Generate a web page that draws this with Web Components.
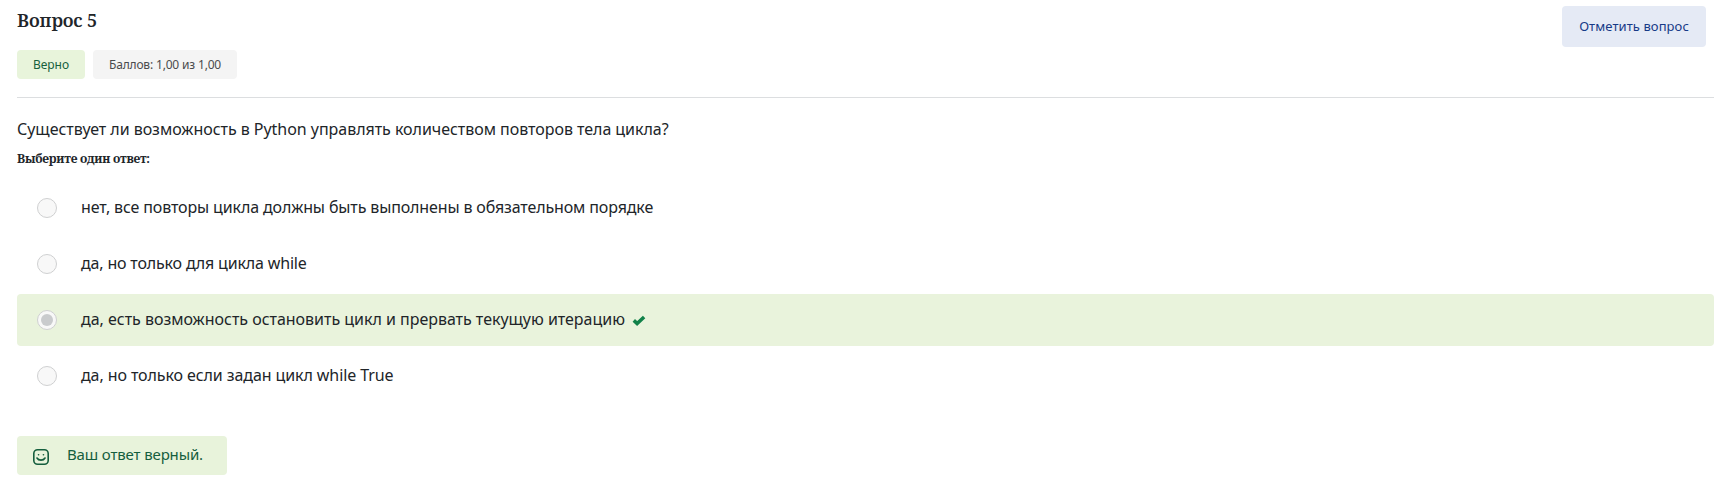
<!DOCTYPE html>
<html lang="ru"><head><meta charset="utf-8"><title>Вопрос 5</title>
<style>body{margin:0;background:#fff;color:#212529;font-family:"Noto Sans","Open Sans",sans-serif}</style></head>
<body>
<quiz-question>
<question-header slot="header">
<span slot="title">Вопрос 5</span>
<status-tag slot="tags" kind="ok">Верно</status-tag>
<status-tag slot="tags" kind="grade">Баллов: 1,00 из 1,00</status-tag>
<flag-button slot="action">Отметить вопрос</flag-button>
</question-header>
<span slot="text">Существует ли возможность в Python управлять количеством повторов тела цикла?</span>
<span slot="prompt">Выберите один ответ:</span>
<answer-option style="--ls:-.133px">нет, все повторы цикла должны быть выполнены в обязательном порядке</answer-option>
<answer-option style="--ls:-.17px">да, но только для цикла while</answer-option>
<answer-option checked correct style="--ls:-.02px">да, есть возможность остановить цикл и прервать текущую итерацию</answer-option>
<answer-option style="--ls:-.09px">да, но только если задан цикл while True</answer-option>
<answer-feedback slot="feedback">Ваш ответ верный.</answer-feedback>
</quiz-question>
<script>
const define=(name,html)=>customElements.define(name,class extends HTMLElement{
constructor(){super();const t=document.createElement('template');t.innerHTML=html;this.attachShadow({mode:'open'}).append(t.content.cloneNode(true));}
});
define('quiz-question',`<style>
:host{display:block;padding:0 5px 0 17px}
.text{font-size:16px;line-height:24px;margin-top:19px;letter-spacing:-.035px;white-space:nowrap}
.prompt{font:700 12px/18px "Noto Serif","DejaVu Serif Condensed","DejaVu Serif",serif;margin-top:9px;letter-spacing:-.25px;white-space:nowrap}
.answers{display:flex;flex-direction:column;gap:4px;margin-top:14px}
.feedback{display:flex;margin-top:34px}
</style><slot name="header"></slot><div class="text"><slot name="text"></slot></div><div class="prompt"><slot name="prompt"></slot></div><div class="answers"><slot></slot></div><div class="feedback"><slot name="feedback"></slot></div>`);
define('question-header',`<style>
:host{display:flex;box-sizing:border-box;height:98px;justify-content:space-between;align-items:flex-start;border-bottom:1px solid #dcdee0}
.title{font:600 18px/24px "Noto Serif","DejaVu Serif Condensed","DejaVu Serif",serif;margin-top:8px;letter-spacing:-.15px}
.tags{display:flex;gap:8px;margin-top:18px}
.action{margin:6px 8px 0 0}
</style><div><div class="title"><slot name="title"></slot></div><div class="tags"><slot name="tags"></slot></div></div><div class="action"><slot name="action"></slot></div>`);
define('status-tag',`<style>
:host{display:flex;justify-content:center;box-sizing:border-box;height:29px;width:144px;border-radius:4px;background:#f4f4f4;color:#4a4b4d;font-size:12px;line-height:30px;white-space:nowrap;letter-spacing:-.17px}
:host([kind=ok]){width:68px;background:#e8f4db;color:#16603d;letter-spacing:0}
</style><slot></slot>`);
define('flag-button',`<style>
:host{display:block}
button{display:block;width:144px;height:41px;padding:0;border:0;border-radius:4px;background:#e5eaf5;color:#173a87;font:13px/41px "Noto Sans",sans-serif;letter-spacing:.08px;white-space:nowrap}
</style><button><slot></slot></button>`);
define('answer-option',`<style>
:host{display:flex;align-items:center;height:52px;border-radius:4px;font-size:16px;letter-spacing:var(--ls);white-space:nowrap}
:host([correct]){background:#e9f3dc}
.radio{box-sizing:border-box;width:20px;height:20px;margin:0 24px 0 20px;border:1px solid #cfd0d1;border-radius:50%;background:#f8f8f8;display:grid;place-items:center}
:host([checked]) .radio::after{content:"";width:12px;height:12px;border-radius:50%;background:#c9cbcd}
.label{line-height:24px;margin-bottom:2px}
svg{display:none;margin-left:7px}
:host([correct]) svg{display:block}
</style><span class="radio"></span><span class="label"><slot></slot></span><svg width="14" height="11" viewBox="0 0 14 11"><path d="M1.8 5.4 5.1 8.5 12.1 1.9" fill="none" stroke="#118149" stroke-width="3.5"/></svg>`);
define('answer-feedback',`<style>
:host{display:flex;align-items:center;box-sizing:border-box;width:210px;height:39px;padding-left:16px;border-radius:4px;background:#e8f3db;color:#155e3e;font-size:15px;white-space:nowrap;letter-spacing:-.14px}
svg{margin:3px 18px 0 0}
.msg{line-height:37px;height:39px}
</style><svg width="16" height="16" viewBox="0 0 16 16" fill="none" stroke="currentColor" stroke-width="1.6" stroke-linecap="round"><rect x=".8" y=".8" width="14.4" height="14.4" rx="3.8"/><path d="M4 9c1.6 2.8 6.4 2.8 8 0"/><path d="M5.5 5.7h.1M10.4 5.7h.1"/></svg><span class="msg"><slot></slot></span>`);
</script></body></html>
